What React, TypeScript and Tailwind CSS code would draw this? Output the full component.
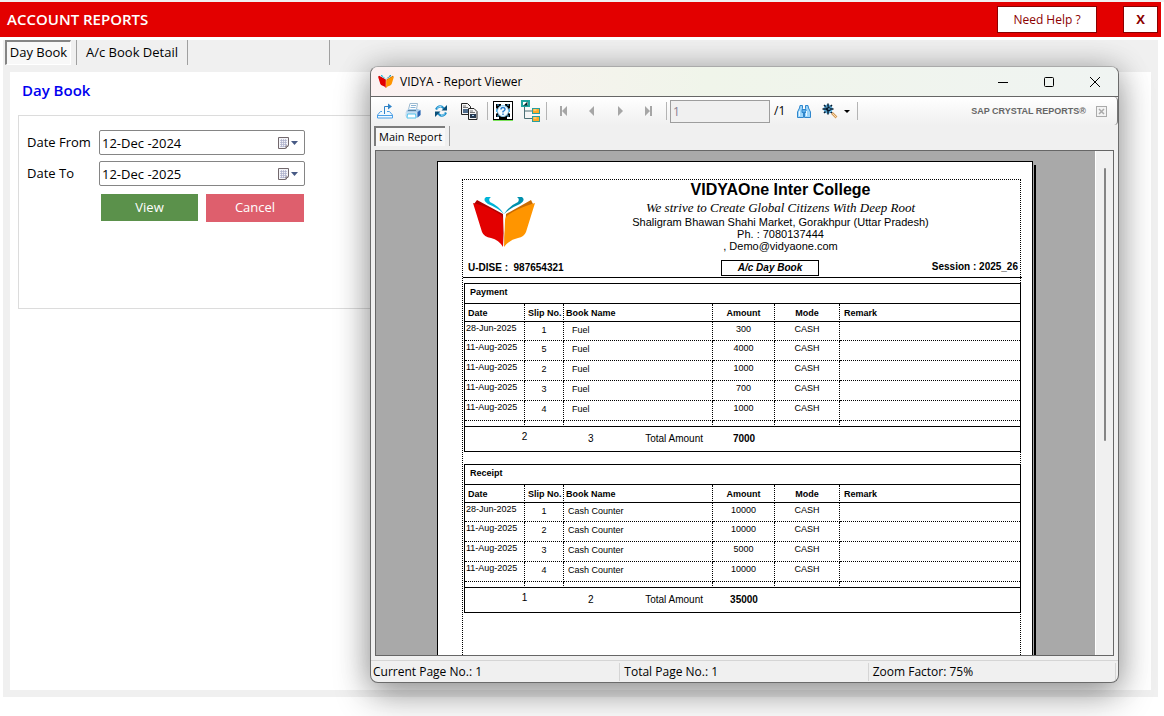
import React from "react";

type Entry = { date: string; slip: string; book: string; amount: string };

const payments: Entry[] = [
  { date: "28-Jun-2025", slip: "1", book: "Fuel", amount: "300" },
  { date: "11-Aug-2025", slip: "5", book: "Fuel", amount: "4000" },
  { date: "11-Aug-2025", slip: "2", book: "Fuel", amount: "1000" },
  { date: "11-Aug-2025", slip: "3", book: "Fuel", amount: "700" },
  { date: "11-Aug-2025", slip: "4", book: "Fuel", amount: "1000" },
];

const receipts: Entry[] = [
  { date: "28-Jun-2025", slip: "1", book: "Cash Counter", amount: "10000" },
  { date: "11-Aug-2025", slip: "2", book: "Cash Counter", amount: "10000" },
  { date: "11-Aug-2025", slip: "3", book: "Cash Counter", amount: "5000" },
  { date: "11-Aug-2025", slip: "4", book: "Cash Counter", amount: "10000" },
];

function BookLogo({ className }: { className: string }) {
  return (
    <svg viewBox="0 0 62 50" className={className} aria-hidden="true">
      <path d="M4 3 L30 17 L31 50 L29 22 L1 7 Z" fill="#b00000" />
      <path d="M0 6 Q17 10 28 18 Q30 20 30 24 L30 50 Q26 43 18 41 Q11 40 9 35 Z" fill="#e30000" />
      <path d="M58 3 L33 17 L31 50 L34 22 L60 7 Z" fill="#c96a00" />
      <path d="M62 6 Q45 11 35 18 Q32 20 32 24 L31 50 Q36 43 45 41 Q51 40 53 35 Z" fill="#ff9500" />
      <path d="M18 0 L13 0 Q9 3 15 7 Q25 11 31 17 Q26 9 17 5 Q15 2 18 0 Z" fill="#00b4d8" />
      <path d="M44 0 L49 0 Q53 3 47 7 Q37 11 31 17 Q36 9 45 5 Q47 2 44 0 Z" fill="#0090ad" />
    </svg>
  );
}

function ExportIcon() {
  return (
    <svg viewBox="0 0 16 16" className="h-4 w-4" fill="none" stroke="#4a9fe6">
      <path d="M5 8.5H3.5L0.500 12v3h15v-3L12.500 8.500H10" fill="#f2f9ff" />
      <path d="M0.500 12.500h15" />
      <path d="M7.500 11V3.500h5" stroke="#2f83c8" />
      <path d="M11 0.500l4 3-4 3z" fill="#2f83c8" stroke="none" />
    </svg>
  );
}

function PrinterIcon() {
  return (
    <svg viewBox="0 0 16 16" className="h-4 w-4">
      <path d="M5 0.5h7.500l-1 6H3.500z" fill="#fff" stroke="#9dbad0" />
      <path d="M6 2.5h5M5.500 4.500h5" stroke="#8cb4d4" />
      <path d="M1.500 7.500l2-1.500h9l3 1v5l-2.500 2.500H2l-1.500-1.500z" fill="#a9cdea" />
      <path d="M0.500 9h12v4.500H1z" fill="#c7def0" />
      <path d="M12.500 9l3-2v5l-3 2.500z" fill="#2a62b0" />
      <path d="M3 7.500h8" stroke="#56809f" />
      <path d="M2.500 11h8l0.500 4H2z" fill="#fff" stroke="#55c5ee" />
    </svg>
  );
}

function RefreshIcon() {
  return (
    <svg viewBox="0 0 16 16" className="h-4 w-4" fill="none">
      <path d="M3 6.500Q5 2.500 8.500 3.500L11 5.500" stroke="#1f8fc9" strokeWidth="2.200" />
      <path d="M14 2v5.500H8.500z" fill="#0a4f78" />
      <path d="M13 9.500Q11 13.500 7.500 12.500L5 10.500" stroke="#1f8fc9" strokeWidth="2.200" />
      <path d="M2 14V8.500h5.500z" fill="#0a4f78" />
      <path d="M4 5.500Q5.500 3 8.500 3.300M12 10.500Q10.500 12.800 8 12.200" stroke="#9fe0ff" />
    </svg>
  );
}

function CopyIcon() {
  return (
    <svg viewBox="0 0 17 17" className="h-[17px] w-[17px]" stroke="#222">
      <path d="M0.500 0.500h6l3 3v8h-9z" fill="#f3f3f3" />
      <path d="M2 6h6v4H2z" fill="#4e6c8c" stroke="none" />
      <path d="M2 3h3M2 4.500h5" stroke="#777" />
      <path d="M7.500 5.500h5.500l3 3v8H7.500z" fill="#f3f3f3" />
      <path d="M9 11h6v4H9z" fill="#26384d" stroke="none" />
      <path d="M9 8h3M9 9.500h5" stroke="#777" />
      <path d="M11 12.500h2" stroke="#a8d4f5" />
    </svg>
  );
}

function ParameterIcon() {
  return (
    <svg viewBox="0 0 20 20" className="h-5 w-5">
      <path d="M0 0h20v19H0z" fill="#000" />
      <path d="M0 19h20v1H0z" fill="#7be35a" />
      <path d="M1 1h18v17H1z" fill="#fff" />
      <path d="M3 3h5v2h4V3h5v4l-1 1v4l1 1v3h-3v2H6v-2H3v-3l1-1V8L3 7z" fill="#000" />
      <circle cx="10" cy="10" r="5.500" fill="#f4fbff" stroke="#8fd0f5" />
      <path d="M4 4h2M14 4h2M4 15h2M14 15h2M3.500 8v3M16.500 8v3" stroke="#4fb4ee" />
      <path d="M8 8.500Q8 6.500 10 6.500T12 8.500Q12 9.500 10 10.500V11.500M10 12.500V14" fill="none" stroke="#2a7fd0" strokeWidth="1.400" />
    </svg>
  );
}

function TreeIcon() {
  return (
    <svg viewBox="0 0 20 22" className="h-[22px] w-5">
      <path d="M3.500 6v12.500h8M3.500 11h8" fill="none" stroke="#4c6f75" />
      <rect x="1" y="1" width="7" height="5" fill="#fff" stroke="#1fa5a0" strokeWidth="2" />
      <path d="M2.500 5.500L6.500 1.500V5.500z" fill="#052b2e" />
      <rect x="11.500" y="8.500" width="7" height="5" fill="#ffa928" stroke="#2a9f9c" />
      <rect x="11.500" y="16.500" width="7" height="5" fill="#ffa928" stroke="#2a9f9c" />
      <path d="M12.500 10h3M12.500 18h3" stroke="#ffe7a8" />
    </svg>
  );
}

function BinocularsIcon() {
  return (
    <svg viewBox="0 0 14 13" className="h-[13px] w-[14px]" stroke="#2f86cc">
      <path d="M3 0.500h2.500v3L6.500 7v5.500h-6V7L2.500 3z" fill="#9dd6fb" />
      <path d="M11 0.500H8.500v3L7.500 7v5.500h6V7L11.500 3z" fill="#9dd6fb" />
      <path d="M5 4.500h4v3H5z" fill="#5dade8" />
      <path d="M2.500 6v5M9.500 6v5" stroke="#e8f6ff" />
    </svg>
  );
}

function MagnifierIcon() {
  return (
    <svg viewBox="0 0 16 16" className="h-4 w-4" fill="none">
      <path d="M10 10l4.500 4.500" stroke="#d49a56" strokeWidth="2.500" />
      <path d="M10.500 10.500l4 4" stroke="#f8dfb8" />
      <circle cx="6" cy="6" r="4.500" fill="#5bb4e8" />
      <path d="M6 0.500v11M0.500 6h11M2 2l8 8M10 2l-8 8" stroke="#071b2e" strokeWidth="1.500" />
      <path d="M3.500 4h2M7.500 4h1.500M3 8h2M7.500 8.500h2M6 6h2" stroke="#7cd0fa" />
    </svg>
  );
}

function PagerIcon({ d }: { d: string }) {
  return (
    <svg viewBox="0 0 8 10" className="h-[10px] w-2" fill="#a6a6a6">
      <path d={d} />
    </svg>
  );
}

function ToolButton({ label, children }: { label: string; children: React.ReactNode }) {
  return (
    <button type="button" aria-label={label} className="flex h-6 w-7 shrink-0 items-center justify-center">
      {children}
    </button>
  );
}

function Separator() {
  return <span className="mx-px h-[18px] w-px shrink-0 bg-[#b4b4b4]" />;
}

function CalendarIcon() {
  return (
    <svg viewBox="0 0 20 12" className="h-3 w-5">
      <path d="M0.500 0.500h10v8l-3 3h-7z" fill="#f4f4f8" stroke="#72686c" />
      <path d="M2 3.500h7M2 5.500h7M2 7.500h7M2 9.500h5M3.500 2v8M5.500 2v8M7.500 2v8" stroke="#a9acc8" strokeWidth="0.700" />
      <path d="M8 11.500V9h2.500" fill="none" stroke="#72686c" />
      <path d="M13 4h7l-3.500 4z" fill="#475a85" />
    </svg>
  );
}

function DateField({ id, label, value }: { id: string; label: string; value: string }) {
  return (
    <div className="flex items-center">
      <label htmlFor={id} className="w-[72px] text-[13px]">
        {label}
      </label>
      <div className="flex h-[25px] w-[206px] items-center rounded-xs border border-[#858585] bg-white pr-1.5">
        <input id={id} type="text" defaultValue={value} className="min-w-0 flex-1 bg-transparent pt-0.5 pl-0.5 text-[13px] outline-none" />
        <button type="button" aria-label={"Choose " + label}>
          <CalendarIcon />
        </button>
      </div>
    </div>
  );
}

type SectionProps = { title: string; rows: Entry[]; first: string; second: string; total: string };

function ReportSection({ title, rows, first, second, total }: SectionProps) {
  const head = "border-b border-b-black p-0 font-bold";
  const cell = "border-b border-b-black [border-bottom-style:dotted] p-0 align-top";
  const divide = "border-r border-r-black [border-right-style:dotted]";
  return (
    <table className="w-full table-fixed border-separate border-spacing-0 border border-black text-[9px] leading-3">
      <colgroup>
        <col className="w-[60px]" />
        <col className="w-[39px]" />
        <col className="w-[149px]" />
        <col className="w-[62px]" />
        <col className="w-[65px]" />
        <col />
      </colgroup>
      <thead>
        <tr className="h-5">
          <th colSpan={6} className="border-b border-black p-0 pb-1 pl-[5px] text-left font-bold">
            {title}
          </th>
        </tr>
        <tr className="h-[18px]">
          <th className={`${head} ${divide} pl-[3px] text-left`}>Date</th>
          <th className={`${head} ${divide} pl-[3px] text-left whitespace-nowrap`}>Slip No.</th>
          <th className={`${head} ${divide} pl-0.5 text-left`}>Book Name</th>
          <th className={`${head} ${divide} text-center`}>Amount</th>
          <th className={`${head} ${divide} text-center`}>Mode</th>
          <th className={`${head} pl-1 text-left`}>Remark</th>
        </tr>
      </thead>
      <tbody>
        {rows.map((row, i) => (
          <tr key={i} className="h-5 first:h-[19px]">
            <td className={`${cell} ${divide} pl-px whitespace-nowrap`}>{row.date}</td>
            <td className={`${cell} ${divide} pt-0.5 text-center`}>{row.slip}</td>
            <td className={`${cell} ${divide} pt-0.5 ${row.book === "Fuel" ? "pl-2" : "pl-1"}`}>{row.book}</td>
            <td className={`${cell} ${divide} pt-px text-center`}>{row.amount}</td>
            <td className={`${cell} ${divide} pt-px text-center`}>CASH</td>
            <td className={cell} />
          </tr>
        ))}
        <tr className="h-1.5">
          {[0, 1, 2, 3, 4].map((n) => (
            <td key={n} className={`border-b border-b-black p-0 ${divide}`} />
          ))}
          <td className="border-b border-black p-0" />
        </tr>
      </tbody>
      <tfoot className="text-[10px]">
        <tr className="h-6">
          <td colSpan={2} className="p-0 pb-1 pl-5 text-center">
            {first}
          </td>
          <td className="p-0">
            <div className="flex justify-between pr-2.5 pl-6">
              <span>{second}</span>
              <span>Total Amount</span>
            </div>
          </td>
          <td className="p-0 text-center font-bold">{total}</td>
          <td colSpan={2} />
        </tr>
      </tfoot>
    </table>
  );
}

function ReportPage() {
  return (
    <div className="mt-[10px] ml-[61px] flex w-[600px] shrink-0">
      <article className="flex w-[596px] flex-col border border-b-0 border-black bg-white pt-[17px] pr-[11px] pl-6 font-['Liberation_Sans',Arial,sans-serif] text-black">
        <div className="flex flex-1 flex-col border border-b-0 border-dotted border-black">
          <header className="-mr-0.5 flex h-[98px] flex-col border-b border-black">
            <div className="flex">
              <BookLogo className="mt-[17px] ml-[10px] h-[50px] w-[62px] shrink-0" />
              <div className="flex flex-1 flex-col items-center pl-1 text-[11px] leading-3">
                <h2 className="text-base leading-5 font-bold">VIDYAOne Inter College</h2>
                <p className="font-['Liberation_Serif',serif] text-[13px] leading-4 italic">
                  We strive to Create Global Citizens With Deep Root
                </p>
                <p>Shaligram Bhawan Shahi Market, Gorakhpur (Uttar Pradesh)</p>
                <p>Ph. : 7080137444</p>
                <p>, Demo@vidyaone.com</p>
              </div>
            </div>
            <div className="mt-auto grid grid-cols-[258px_98px_1fr] items-center pb-px text-[10px] leading-3 font-bold">
              <span className="pl-[5px] whitespace-pre">U-DISE :  987654321</span>
              <span className="border border-black py-px text-center italic">A/c Day Book</span>
              <span className="pr-1 pb-0.5 text-right">Session : 2025_26</span>
            </div>
          </header>
          <div className="-mr-px flex flex-col gap-3 pt-[5px] pl-px">
            <ReportSection title="Payment" rows={payments} first="2" second="3" total="7000" />
            <ReportSection title="Receipt" rows={receipts} first="1" second="2" total="35000" />
          </div>
        </div>
      </article>
      <div className="mt-1 ml-px w-0.5 bg-black" />
    </div>
  );
}

function ReportViewer() {
  return (
    <section
      aria-label="Report Viewer"
      className="absolute top-16 right-[45px] bottom-[33px] left-[370px] flex flex-col overflow-hidden rounded-lg border border-[#6b6b6b] border-t-[#aaaaaa] bg-[#f0f0f0] text-[12px] shadow-[0_0_30px_rgba(0,0,0,0.22),0_14px_36px_rgba(0,0,0,0.32)]"
    >
      <div className="flex h-[30px] shrink-0 items-center border-b border-[#666666] bg-linear-to-r from-[#fbf1f1] via-[#f0f5ea] via-45% to-[#f0f4f2] pl-[7px]">
        <BookLogo className="h-[13px] w-4" />
        <h2 className="ml-1.5 flex-1">VIDYA - Report Viewer</h2>
        <button type="button" aria-label="Minimize" className="flex w-[46px] justify-center">
          <svg viewBox="0 0 10 10" className="h-2.5 w-2.5"><path d="M0 5.500h10" stroke="#000" /></svg>
        </button>
        <button type="button" aria-label="Maximize" className="flex w-[46px] justify-center">
          <svg viewBox="0 0 10 10" className="h-2.5 w-2.5"><rect x="0.500" y="0.500" width="9" height="9" rx="1" fill="none" stroke="#000" /></svg>
        </button>
        <button type="button" aria-label="Close" className="flex w-[46px] justify-center">
          <svg viewBox="0 0 10 10" className="h-2.5 w-2.5"><path d="M0 0l10 10M10 0L0 10" stroke="#000" /></svg>
        </button>
      </div>

      <div className="flex h-7 shrink-0 items-center rounded-r-sm border-r border-[#777777] bg-linear-to-b from-white to-[#f0f0f0]">
        <ToolButton label="Export"><ExportIcon /></ToolButton>
        <ToolButton label="Print"><PrinterIcon /></ToolButton>
        <ToolButton label="Refresh"><RefreshIcon /></ToolButton>
        <ToolButton label="Copy"><CopyIcon /></ToolButton>
        <span className="w-[3px]" />
        <Separator />
        <ToolButton label="Parameters"><ParameterIcon /></ToolButton>
        <ToolButton label="Group tree"><TreeIcon /></ToolButton>
        <Separator />
        <span className="w-0.5" />
        <ToolButton label="First page"><PagerIcon d="M0 0h2v10H0zM7 0v10L2 5z" /></ToolButton>
        <ToolButton label="Previous page"><PagerIcon d="M6 0v10L1 5z" /></ToolButton>
        <ToolButton label="Next page"><PagerIcon d="M2 0v10L7 5z" /></ToolButton>
        <ToolButton label="Last page"><PagerIcon d="M6 0h2v10H6zM1 0v10L6 5z" /></ToolButton>
        <span className="w-[3px]" />
        <Separator />
        <input
          type="text"
          aria-label="Page number"
          defaultValue="1"
          className="ml-0.5 h-[23px] w-[100px] border border-[#9d9d9d] bg-[#f0f0f0] px-0.5 text-[#8a7f90] outline-none"
        />
        <span className="w-5 pl-1">/1</span>
        <ToolButton label="Find"><BinocularsIcon /></ToolButton>
        <button type="button" aria-label="Zoom" className="ml-1 flex items-center gap-1.5">
          <MagnifierIcon />
          <svg viewBox="0 0 6 3" className="h-[3px] w-1.5"><path d="M0 0h6L3 3z" /></svg>
        </button>
        <span className="w-1.5" />
        <Separator />
        <span className="ml-auto pt-0.5 font-['Liberation_Sans',Arial,sans-serif] text-[9px] font-bold text-[#666666]">SAP CRYSTAL REPORTS®</span>
        <button type="button" aria-label="Close report" className="mx-2.5">
          <svg viewBox="0 0 11 11" className="h-[11px] w-[11px]" fill="none" stroke="#aaaaaa">
            <rect x="0.500" y="0.500" width="10" height="10" fill="#f3f3f3" />
            <path d="M3 3l5 5M8 3l-5 5" strokeWidth="1.500" />
          </svg>
        </button>
      </div>

      <div role="tablist" className="flex h-[25px] shrink-0 items-start gap-1 pt-px pl-[3px]">
        <button
          type="button"
          role="tab"
          aria-selected="true"
          className="h-5 border-t-2 border-l-2 border-[#7c7c7c] bg-[#f8f8f8] px-[3px] text-[11px] leading-[18px] whitespace-nowrap"
        >
          Main Report
        </button>
        <span className="h-5 w-px bg-[#a0a0a0]" />
      </div>

      <div className="mx-1 flex min-h-0 flex-1 border border-[#666666] bg-[#a9a9a9]">
        <div className="flex min-w-0 flex-1 overflow-hidden">
          <ReportPage />
        </div>
        <div className="flex w-[18px] justify-center border-l border-white bg-[#f0f0f0] pt-[17px]">
          <span className="h-[56%] w-0.5 rounded bg-[#858585]" />
        </div>
      </div>

      <footer className="mt-1 grid h-[22px] shrink-0 grid-cols-3 items-center border-t border-[#d5d5d5] pr-0.5">
        <span className="pl-0.5">Current Page No.: 1</span>
        <span className="border-l border-[#d5d5d5] pl-1">Total Page No.: 1</span>
        <span className="border-x border-[#d5d5d5] pl-1">Zoom Factor: 75%</span>
      </footer>
    </section>
  );
}

export default function App() {
  return (
    <div className="relative flex min-h-screen flex-col border-t-2 border-[#f0f0f0] bg-white pr-[3px] font-['Open_Sans','Noto_Sans',sans-serif] text-black">
      <header className="flex h-[35px] items-center bg-[#e30000] pr-[3px] pl-[7px]">
        <h1 className="flex-1 text-[15px] font-semibold text-white">ACCOUNT REPORTS</h1>
        <button type="button" className="h-[27px] w-[100px] border border-[#8b0000] bg-white text-[12px] font-medium text-[#8b0000]">
          Need Help ?
        </button>
        <button type="button" aria-label="Close reports" className="ml-[26px] h-[27px] w-[35px] border border-[#8b0000] bg-white text-[13px] font-bold text-[#8b0000]">
          X
        </button>
      </header>

      <main className="mt-[3px] mr-[3px] mb-[19px] ml-[3px] flex flex-1 flex-col bg-[#f0f0f0] px-[7px] pb-[7px]">
        <nav role="tablist" className="-ml-[5px] flex h-8 items-start text-[13px]">
          <button
            type="button"
            role="tab"
            aria-selected="true"
            className="h-[25px] w-[66px] border-t-2 border-r border-b border-l-2 border-t-[#858585] border-r-white border-b-white border-l-[#858585] bg-[#f8f8f8] whitespace-nowrap"
          >
            Day Book
          </button>
          <span className="ml-[5px] h-[25px] w-px bg-[#a0a0a0]" />
          <button type="button" role="tab" aria-selected="false" className="h-[25px] w-[110px] whitespace-nowrap">
            A/c Book Detail
          </button>
          <span className="h-[25px] w-px bg-[#a0a0a0]" />
          <span className="ml-[141px] h-[25px] w-px bg-[#a0a0a0]" />
        </nav>

        <div className="flex-1 bg-white pt-2 pl-2">
          <h2 className="pl-1 text-[15px] leading-5 font-semibold text-[#0000f0]">Day Book</h2>
          <form className="mt-[15px] flex h-[194px] w-1/2 flex-col gap-1.5 border border-[#dcdcdc] pt-3.5 pl-2" onSubmit={(e) => e.preventDefault()}>
            <DateField id="date-from" label="Date From" value="12-Dec -2024" />
            <DateField id="date-to" label="Date To" value="12-Dec -2025" />
            <div className="mt-0.5 ml-[74px] flex gap-2 text-[13px] font-medium text-white">
              <button type="submit" className="h-[27px] w-[97px] bg-[#5b914b]">
                View
              </button>
              <button type="button" className="h-7 w-[98px] bg-[#de5f6d]">
                Cancel
              </button>
            </div>
          </form>
        </div>
      </main>

      <ReportViewer />
    </div>
  );
}
